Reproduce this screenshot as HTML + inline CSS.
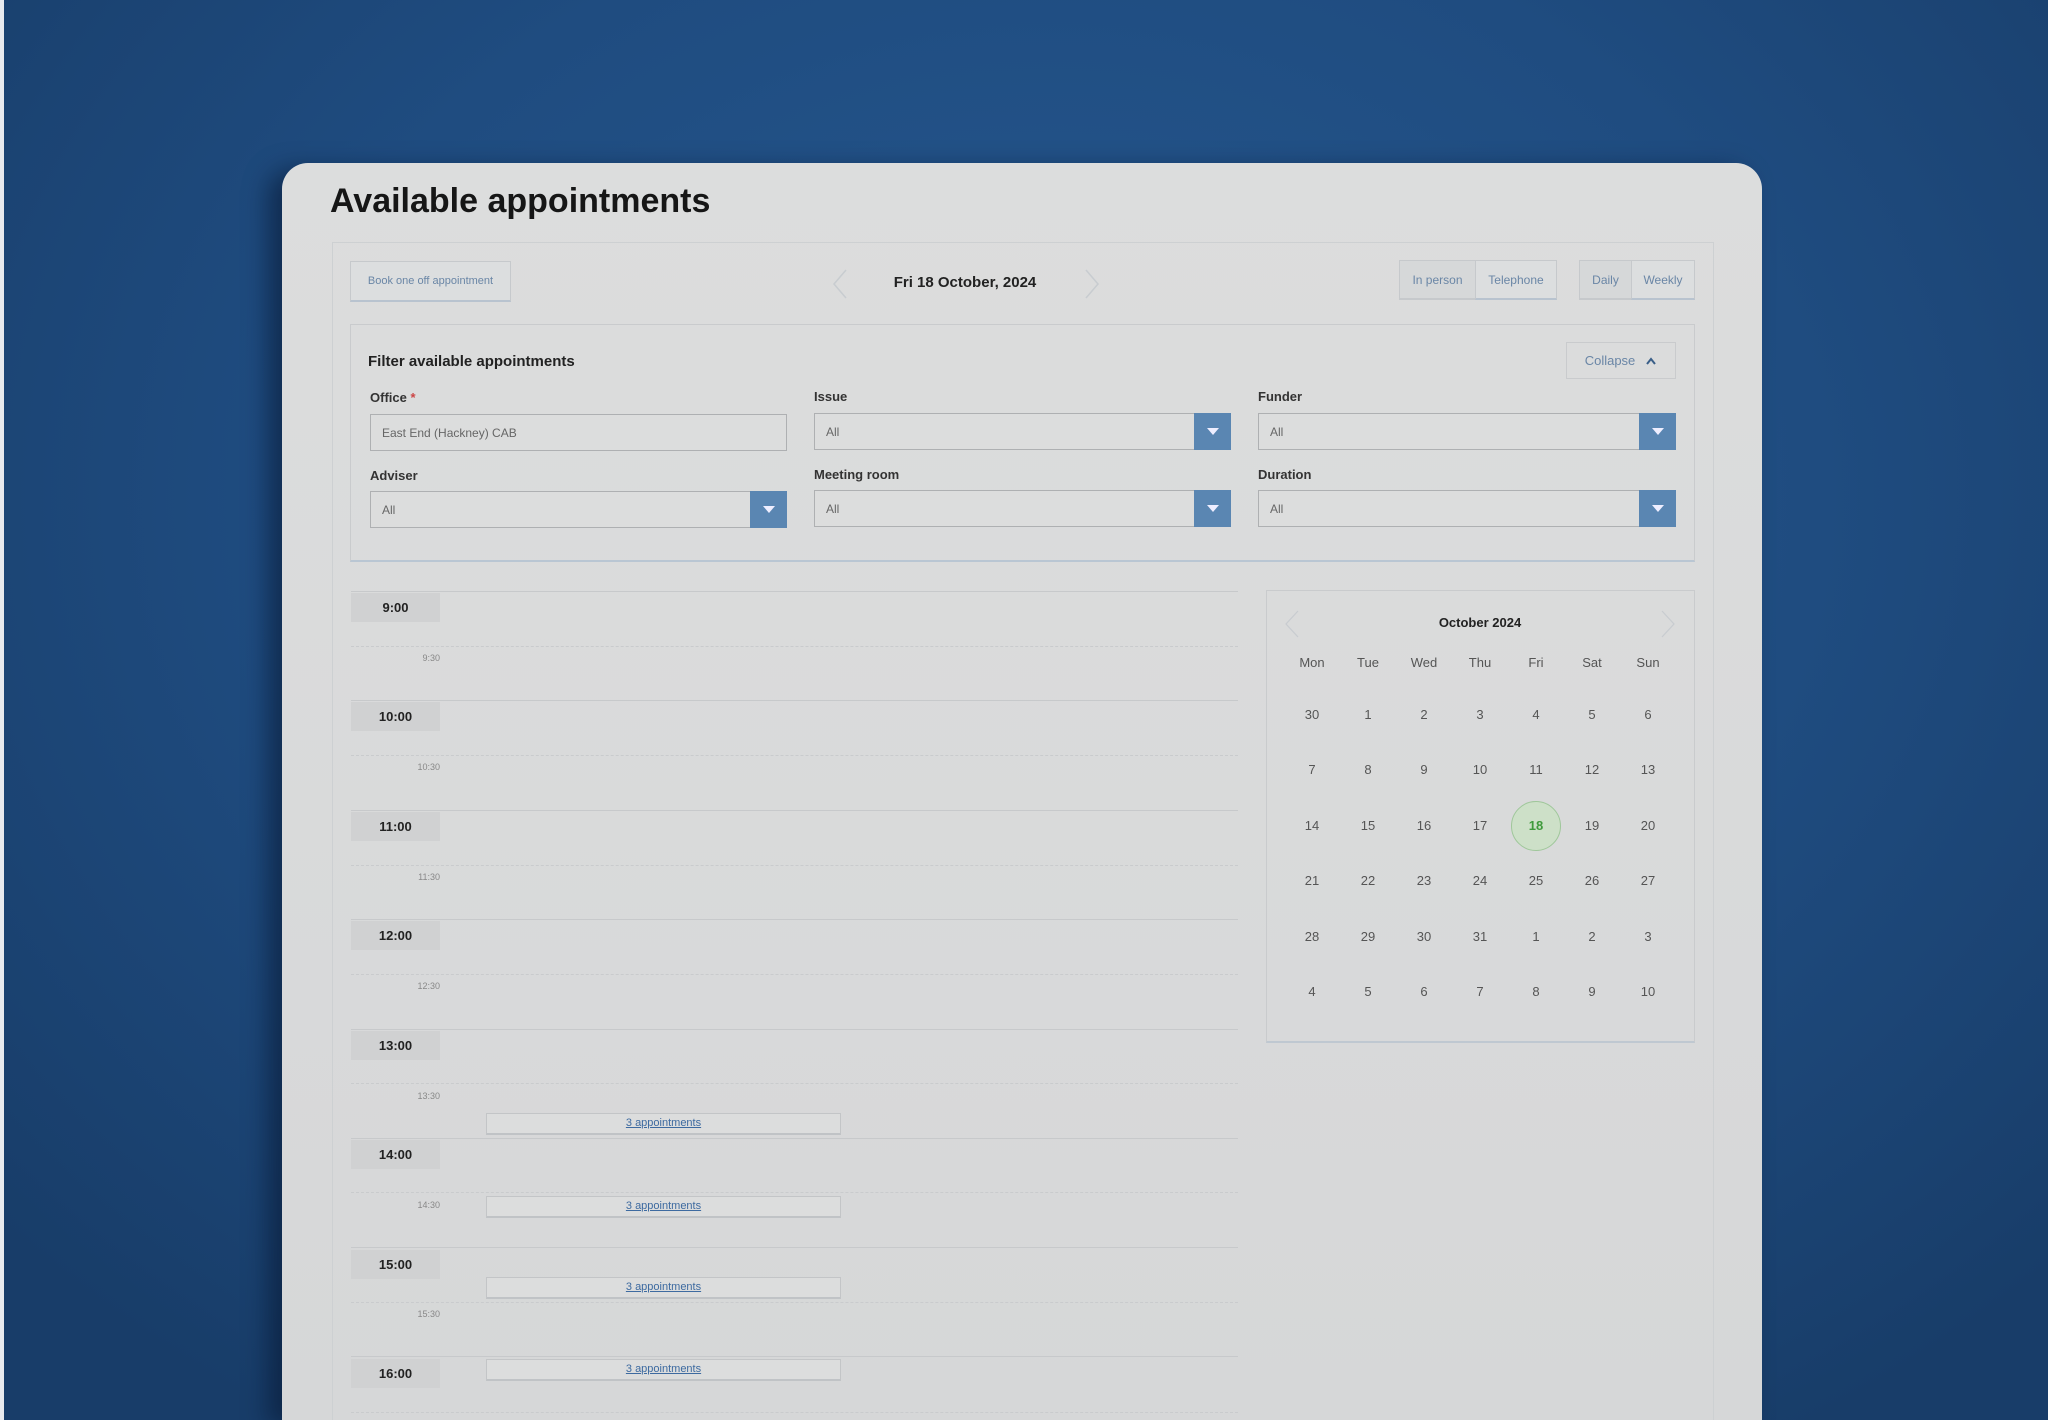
<!DOCTYPE html>
<html style="overflow:hidden;background:#1f4c80"><head><meta charset="utf-8"><style>
*{box-sizing:border-box;margin:0;padding:0}
html,body{width:2048px;height:1420px;overflow:hidden}
body{position:relative;font-family:"Liberation Sans",sans-serif;
background:radial-gradient(ellipse 1400px 1100px at 1050px 500px,#26588f 0%,#1f4c80 55%,#183d69 100%);}
.a{position:absolute}
.card{left:282px;top:163px;width:1480px;height:1257px;background:linear-gradient(180deg,#dcdddd,#d6d7d8);border-radius:26px 26px 0 0;box-shadow:-14px 6px 24px rgba(5,20,45,.55)}
.t{font-size:34px;font-weight:bold;color:#161616;left:330px;top:182px}
.box{border:1px solid #c9cbcd}
.btn{border:1px solid #c6c9cc;border-bottom:2px solid #b8c3cf;background:#dcdedf;color:#6a86a6;font-size:12px;display:flex;align-items:center;justify-content:center}
.lbl{font-size:13px;font-weight:bold;color:#333}
.inp{height:37px;border:1px solid #aeb0b2;background:#dcdddd;font-size:12px;color:#666;padding-left:11px;display:flex;align-items:center}
.dd{position:absolute;right:-1px;top:-1px;width:37px;height:37px;background:#5a86b2}
.dd:after{content:"";position:absolute;left:13px;top:15px;border-left:6px solid transparent;border-right:6px solid transparent;border-top:7px solid #eef}
.hl{left:351px;width:887px;height:1px;background:#c7c9cb}
.dl{left:351px;width:887px;height:0;border-top:1px dashed #c9cbcd}
.hb{left:351px;width:89px;height:29px;background:#d0d1d2;font-size:13px;font-weight:bold;color:#222;display:flex;align-items:center;justify-content:center}
.hh{width:89px;left:351px;text-align:right;font-size:9px;color:#888}
.ap{left:486px;width:355px;height:22px;border:1px solid #c3c5c7;border-bottom:2px solid #c0c3c6;background:#dcdddd;font-size:11px;color:#3d6aa0;text-decoration:underline;text-align:center;line-height:19px}
.c{width:40px;margin-left:-20px;text-align:center;font-size:13px;color:#555}
</style></head><body>
<div class="a" style="left:0;top:0;width:4px;height:1420px;background:#e8eaee"></div>
<div class="a card"></div>
<div class="a t">Available appointments</div>
<div class="a box" style="left:332px;top:242px;width:1382px;height:1200px;border-color:#cdd0d2"></div>
<div class="a btn" style="left:350px;top:261px;width:161px;height:41px;font-size:11px">Book one off appointment</div>
<svg class="a" style="left:830px;top:268px" width="20" height="32"><path d="M16 2 L4 16 L16 30" stroke="#c8ccd0" fill="none" stroke-width="1.5"/></svg>
<div class="a" style="left:865px;top:274px;width:200px;text-align:center;font-size:15px;font-weight:bold;color:#222">Fri 18 October, 2024</div>
<svg class="a" style="left:1082px;top:268px" width="20" height="32"><path d="M4 2 L16 16 L4 30" stroke="#c8ccd0" fill="none" stroke-width="1.5"/></svg>
<div class="a btn" style="left:1399px;top:260px;width:77px;height:40px;background:#d6d8d9;border-bottom-color:#c6c9cc">In person</div>
<div class="a btn" style="left:1475px;top:260px;width:82px;height:40px">Telephone</div>
<div class="a btn" style="left:1579px;top:260px;width:53px;height:40px;background:#d6d8d9;border-bottom-color:#c6c9cc">Daily</div>
<div class="a btn" style="left:1631px;top:260px;width:64px;height:40px">Weekly</div>
<div class="a box" style="left:350px;top:324px;width:1345px;height:238px;border-bottom:2px solid #b9c6d3"></div>
<div class="a" style="left:368px;top:353px;font-size:15px;font-weight:bold;color:#222">Filter available appointments</div>
<div class="a box" style="left:1566px;top:342px;width:110px;height:37px;color:#6a86a6;font-size:13px;display:flex;align-items:center;justify-content:center;gap:10px">Collapse <svg width="12" height="8"><path d="M2 7 L6 2 L10 7" stroke="#3a5f88" stroke-width="2" fill="none"/></svg></div>
<div class="a lbl" style="left:370px;top:390px">Office <span style="color:#c44">*</span></div>
<div class="a lbl" style="left:814px;top:389px">Issue</div>
<div class="a lbl" style="left:1258px;top:389px">Funder</div>
<div class="a inp" style="left:370px;top:414px;width:417px">East End (Hackney) CAB</div>
<div class="a inp" style="left:814px;top:413px;width:417px">All<div class="dd"></div></div>
<div class="a inp" style="left:1258px;top:413px;width:418px">All<div class="dd"></div></div>
<div class="a lbl" style="left:370px;top:468px">Adviser</div>
<div class="a lbl" style="left:814px;top:467px">Meeting room</div>
<div class="a lbl" style="left:1258px;top:467px">Duration</div>
<div class="a inp" style="left:370px;top:491px;width:417px">All<div class="dd"></div></div>
<div class="a inp" style="left:814px;top:490px;width:417px">All<div class="dd"></div></div>
<div class="a inp" style="left:1258px;top:490px;width:418px">All<div class="dd"></div></div>

<div class="a hl" style="top:591px"></div><div class="a hb" style="top:593px">9:00</div><div class="a dl" style="top:646px"></div><div class="a hh" style="top:653px">9:30</div>
<div class="a hl" style="top:700px"></div><div class="a hb" style="top:702px">10:00</div><div class="a dl" style="top:755px"></div><div class="a hh" style="top:762px">10:30</div>
<div class="a hl" style="top:810px"></div><div class="a hb" style="top:812px">11:00</div><div class="a dl" style="top:865px"></div><div class="a hh" style="top:872px">11:30</div>
<div class="a hl" style="top:919px"></div><div class="a hb" style="top:921px">12:00</div><div class="a dl" style="top:974px"></div><div class="a hh" style="top:981px">12:30</div>
<div class="a hl" style="top:1029px"></div><div class="a hb" style="top:1031px">13:00</div><div class="a dl" style="top:1083px"></div><div class="a hh" style="top:1091px">13:30</div>
<div class="a ap" style="top:1113px">3 appointments</div>
<div class="a hl" style="top:1138px"></div><div class="a hb" style="top:1140px">14:00</div><div class="a dl" style="top:1192px"></div><div class="a hh" style="top:1200px">14:30</div>
<div class="a ap" style="top:1196px">3 appointments</div>
<div class="a hl" style="top:1247px"></div><div class="a hb" style="top:1250px">15:00</div><div class="a dl" style="top:1302px"></div><div class="a hh" style="top:1309px">15:30</div>
<div class="a ap" style="top:1277px">3 appointments</div>
<div class="a hl" style="top:1356px"></div><div class="a hb" style="top:1359px">16:00</div><div class="a dl" style="top:1412px"></div>
<div class="a ap" style="top:1359px">3 appointments</div>

<div class="a box" style="left:1266px;top:590px;width:429px;height:453px;border-bottom:2px solid #bfc8d1"></div>
<svg class="a" style="left:1284px;top:610px" width="16" height="28"><path d="M14 1 L2 14 L14 27" stroke="#c8ccd0" fill="none" stroke-width="1.2"/></svg>
<svg class="a" style="left:1660px;top:610px" width="16" height="28"><path d="M2 1 L14 14 L2 27" stroke="#c8ccd0" fill="none" stroke-width="1.2"/></svg>
<div class="a" style="left:1380px;top:615px;width:200px;text-align:center;font-size:13px;font-weight:bold;color:#222">October 2024</div>
<div class="a" style="left:1511px;top:801px;width:50px;height:50px;border-radius:50%;background:#cde0c8;border:1px solid #9fc79a"></div>
<div id="cal"></div>
<script>
var cols=[1312,1368,1424,1480,1536,1592,1648],rows=[715,770,826,881,937,992];
var names=["Mon","Tue","Wed","Thu","Fri","Sat","Sun"];
var d=[[30,1,2,3,4,5,6],[7,8,9,10,11,12,13],[14,15,16,17,18,19,20],[21,22,23,24,25,26,27],[28,29,30,31,1,2,3],[4,5,6,7,8,9,10]];
var h="";
for(var i=0;i<7;i++)h+='<div class="a c" style="left:'+cols[i]+'px;top:655px">'+names[i]+'</div>';
for(var r=0;r<6;r++)for(var i=0;i<7;i++){var s=(r==2&&i==4)?'color:#3f9a3c;font-weight:bold;':'';h+='<div class="a c" style="left:'+cols[i]+'px;top:'+(rows[r]-8)+'px;'+s+'">'+d[r][i]+'</div>';}
document.getElementById("cal").innerHTML=h;
</script>
</body></html>
